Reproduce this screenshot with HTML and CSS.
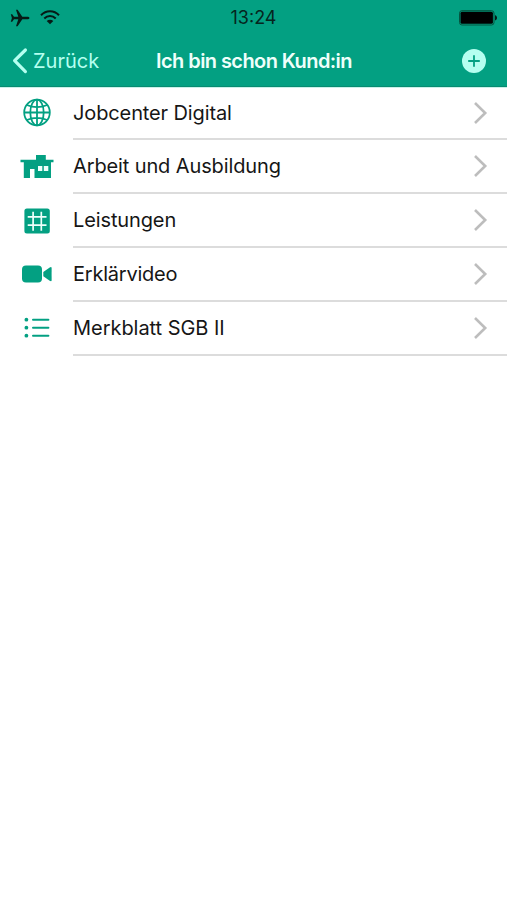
FILE: index.html
```html
<!DOCTYPE html>
<html lang="de">
<head>
<meta charset="utf-8">
<title>Ich bin schon Kund:in</title>
<link rel="stylesheet" href="styles.css">
</head>
<body>
<header class="header">
  <div class="status">
    <div class="status-left">
      <svg width="20" height="18" viewBox="0 0 20 18"><path d="M19.5 9C19.5 8.2 18.4 7.7 17 7.7H12.3L7.6.7H6L8.3 7.7H4L2.2 5.3H.8L1.9 9 .8 12.7H2.2L4 10.3H8.3L6 17.3H7.6L12.3 10.3H17C18.4 10.3 19.5 9.8 19.5 9Z" fill="#061b16"/></svg>
      <svg width="20" height="15" viewBox="0 0 20 15" fill="none" stroke="#061b16" stroke-width="2"><path d="M1 5.2C6-.1 14-.1 19 5.2M4.3 8.5C7.5 5.3 12.5 5.3 15.7 8.5"/><path d="M6.7 11C8.6 9.2 11.4 9.2 13.3 11L10 14.3Z" fill="#061b16" stroke="none"/></svg>
    </div>
    <time class="clock">13:24</time>
    <svg class="battery" width="39" height="16" viewBox="0 0 39 16"><rect x=".5" y=".7" width="34.5" height="14.3" rx="2.5" fill="none" stroke="#04543f"/><rect x="1.5" y="1.8" width="32.4" height="12" rx="1.5" fill="#000"/><path d="M36 5.2C38.7 5.8 38.7 9.8 36 10.4Z" fill="#061b16"/></svg>
  </div>
  <nav class="nav">
    <a class="back"><svg width="17" height="28" viewBox="0 0 17 28" fill="none" stroke="#b5fff0" stroke-width="3.2" stroke-linecap="round" stroke-linejoin="round"><path d="M14.4 3 3.6 13.7 14.4 24.6"/></svg><span>Zurück</span></a>
    <h1 class="title">Ich bin schon Kund:in</h1>
    <svg class="add" width="26" height="26" viewBox="0 0 26 26"><circle cx="13" cy="13" r="12" fill="#b5fff0"/><path d="M13 7.2V18.8M7.2 13H18.8" stroke="#03a082" stroke-width="1.8"/></svg>
  </nav>
</header>
<ul class="list">
  <li class="row">
    <svg class="icon" width="34" height="30" viewBox="0 0 34 30" fill="none" stroke="#03a082" stroke-width="1.8"><circle cx="17" cy="14.5" r="12.8"/><ellipse cx="17" cy="14.5" rx="6.7" ry="12.8"/><path d="M17 1.7V27.3M4.2 14.5H29.8M6.8 7Q17 11.3 27.2 7M6.8 22Q17 17.7 27.2 22"/></svg>
    <div class="cell"><span class="label">Jobcenter Digital</span><svg class="chevron" width="16" height="24" viewBox="0 0 16 24"><path d="M2 2 12.2 12 2 22"/></svg></div>
  </li>
  <li class="row">
    <svg class="icon" width="34" height="30" viewBox="0 0 34 30" fill="#03a082"><path d="M16 3H25.8V7.7H33.5V10.3H31V26H14.5V17H10V26H3.8V10.3H.5V7.7H16Z"/><path d="M18 14H22.3V19H18ZM23.8 14H28.3V19H23.8Z" fill="#effffb"/></svg>
    <div class="cell"><span class="label">Arbeit und Ausbildung</span><svg class="chevron" width="16" height="24" viewBox="0 0 16 24"><path d="M2 2 12.2 12 2 22"/></svg></div>
  </li>
  <li class="row">
    <svg class="icon" width="34" height="30" viewBox="0 0 34 30"><rect x="4.4" y="2.4" width="25.4" height="25.2" rx="2.5" fill="#03a082"/><path d="M13.1 5.7V24.7M21.3 5.7V24.7M7.7 10.8H26.5M7.7 19.2H26.5" stroke="#effffb" stroke-width="1.7"/></svg>
    <div class="cell"><span class="label">Leistungen</span><svg class="chevron" width="16" height="24" viewBox="0 0 16 24"><path d="M2 2 12.2 12 2 22"/></svg></div>
  </li>
  <li class="row">
    <svg class="icon" width="34" height="30" viewBox="0 0 34 30" fill="#03a082"><rect x="2" y="6.6" width="20" height="17" rx="4"/><path d="M23.3 13 29.7 8.4Q31.6 7.2 31.6 9V21.2Q31.6 23 29.7 21.8L23.3 17.2Z"/></svg>
    <div class="cell"><span class="label video">Erklärvideo</span><svg class="chevron" width="16" height="24" viewBox="0 0 16 24"><path d="M2 2 12.2 12 2 22"/></svg></div>
  </li>
  <li class="row">
    <svg class="icon" width="34" height="30" viewBox="0 0 34 30" fill="#03a082"><circle cx="6.4" cy="6.7" r="1.9"/><circle cx="6.4" cy="14.7" r="1.9"/><circle cx="6.4" cy="22.7" r="1.9"/><path d="M13 6.7H28.4M13 14.7H28.4M13 22.7H28.4" stroke="#03a082" stroke-width="2" stroke-linecap="round"/></svg>
    <div class="cell"><span class="label merkblatt">Merkblatt SGB II</span><svg class="chevron" width="16" height="24" viewBox="0 0 16 24"><path d="M2 2 12.2 12 2 22"/></svg></div>
  </li>
</ul>
</body>
</html>
```
FILE: styles.css
```css
* { box-sizing: border-box; }
body {
  margin: 0;
  min-height: 900px;
  background: #fff;
  color: #161616;
  font-family: Inter, "Liberation Sans", sans-serif;
}
svg { display: block; flex: none; }
.header {
  height: 87px;
  background: #03a082;
  border-bottom: 1px solid #078b71;
  box-shadow: 0 1px #c8f1e8;
}
.status, .nav {
  display: grid;
  grid-template-columns: 1fr auto 1fr;
  align-items: center;
}
.status { height: 35px; padding: 0 9px 0 10px; }
.status-left { display: flex; align-items: center; gap: 10px; }
.clock { font-size: 18px; line-height: 22px; margin-right: 1px; color: #06251e; }
.battery { justify-self: end; }
.nav { height: 52px; padding: 0 20px 0 11px; }
.back { display: flex; align-items: center; gap: 5px; color: #b5fff0; font-size: 20px; line-height: 26px; }
.title { margin: 0; padding-left: 5px; margin-right: -5px; color: #effffb; font-size: 20px; line-height: 26px; font-weight: 600; letter-spacing: -.58px; white-space: nowrap; }
.add { justify-self: end; }
.list { list-style: none; margin: 0; padding: 0; margin-top: -.4px; }
.row { display: flex; align-items: center; height: 53.8px; padding-left: 20px; }
.icon { margin-top: -1px; }
.cell {
  flex: 1;
  display: flex;
  align-items: center;
  justify-content: space-between;
  height: 100%;
  margin-left: 19px;
  padding: 0 18px 0 0;
  border-bottom: 2px solid #dcdcdc;
}
.label { font-size: 20px; line-height: 26px; white-space: nowrap; letter-spacing: -.12px; }
.merkblatt { letter-spacing: -.04px; }
.video { letter-spacing: -.22px; }
.chevron { fill: none; stroke: #bdbdbd; stroke-width: 2.6; }
```
